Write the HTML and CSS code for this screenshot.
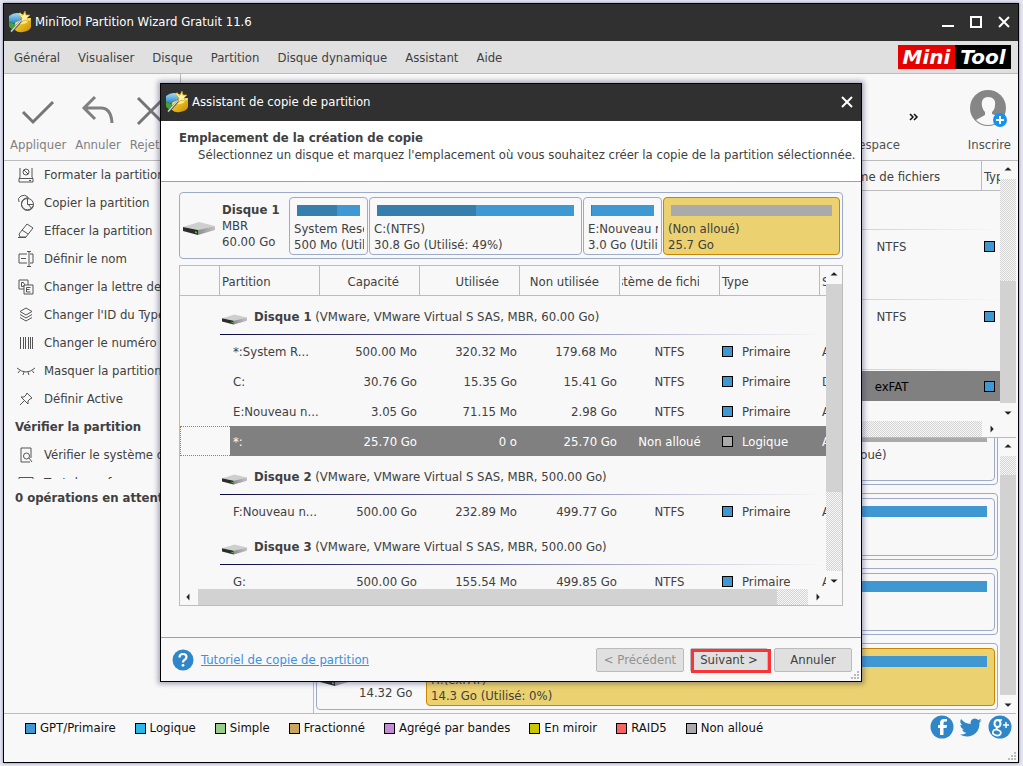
FILE: index.html
```html
<!DOCTYPE html>
<html lang="fr">
<head>
<meta charset="utf-8">
<title>MiniTool Partition Wizard Gratuit 11.6</title>
<link rel="stylesheet" href="styles.css">
</head>
<body>
<svg class="defs" aria-hidden="true">
  <defs>
    <linearGradient id="gold" x1="0" y1="0" x2="1" y2="1"><stop offset="0" stop-color="#ffe23a"/><stop offset="1" stop-color="#c98a00"/></linearGradient>
    <linearGradient id="blue" x1="0" y1="0" x2="0" y2="1"><stop offset="0" stop-color="#a8dcf4"/><stop offset="1" stop-color="#1f7fc0"/></linearGradient>
    <linearGradient id="side" x1="0" y1="0" x2="1" y2="0"><stop offset="0" stop-color="#8e8e8e"/><stop offset="1" stop-color="#c2c2c2"/></linearGradient>
    <symbol id="wizard" viewBox="0 0 22 22">
      <path d="M0 5q6-5 13-2l1 5-7 5-7-2z" fill="url(#blue)"/>
      <path d="M0 11l6 2v6q-5-1-6-4z" fill="#3fa535"/>
      <path d="M6 12l8-4 8-1v9q-1 4-8 5-5 1-8-2z" fill="url(#gold)"/>
      <path d="M6 12l8-4 8-1q-2 5-8 6t-8-1z" fill="#ffe97a"/>
      <path d="M13 9L2 21" stroke="#4a4a55" stroke-width="2.400"/><path d="M12 9.500L2 20.500" stroke="#d8d8e0" stroke-width="1.200"/>
      <path d="M16 0l1 4 4 0-3 3 2 4-4-2-4 2 1-4-3-3h4z" fill="#fff3a0" stroke="#c99b1c" stroke-width=".7"/>
      <path d="M11 1l1 2 2 0-2 2-2-1z" fill="#ffe66a"/>
    </symbol>
    <symbol id="drive" viewBox="0 0 32 13">
      <path d="M0 5L16 0l16 4-16 4z" fill="#cfcfcf"/>
      <path d="M0 5l15 3v5L0 9z" fill="#2c2c2c"/>
      <path d="M15 8l17-4v4l-17 5z" fill="url(#side)"/>
      <path d="M12 9.300l2 .4v1.600l-2-.4z" fill="#45d21e"/>
    </symbol>
    <symbol id="up" viewBox="0 0 18 18"><path d="M5 9.500L9 6l4 3.500z" fill="#222"/></symbol>
  </defs>
</svg>

<main class="window">
  <header class="titlebar">
    <svg class="logo-icon"><use href="#wizard"/></svg>
    <h1 class="title">MiniTool Partition Wizard Gratuit 11.6</h1>
    <div class="window-buttons">
      <button aria-label="Réduire"><svg viewBox="0 0 12 12"><path d="M0 10h12" stroke="#fff" stroke-width="2"/></svg></button>
      <button aria-label="Agrandir"><svg viewBox="0 0 12 12"><path d="M1 1h10v10H1z" fill="none" stroke="#fff" stroke-width="2"/></svg></button>
      <button aria-label="Fermer"><svg viewBox="0 0 12 12"><path d="M1 1l10 10M11 1L1 11" stroke="#fff" stroke-width="2"/></svg></button>
    </div>
  </header>

  <nav class="menu">
    <button>Général</button><button>Visualiser</button><button>Disque</button><button>Partition</button><button>Disque dynamique</button><button>Assistant</button><button>Aide</button>
    <div class="brand"><span class="brand-mini">Mini</span><span class="brand-tool">Tool</span></div>
  </nav>

  <div class="toolbar">
    <button class="tool" disabled><svg viewBox="0 0 36 36"><path d="M3 19l10 10L33 9" fill="none" stroke="#757575" stroke-width="3"/></svg>Appliquer</button>
    <button class="tool" disabled><svg viewBox="0 0 36 36"><path d="M15 4L4 15l11 11M4 15h17q10 0 11 15" fill="none" stroke="#808080" stroke-width="3"/></svg>Annuler</button>
    <button class="tool" disabled><svg viewBox="0 0 36 36"><path d="M5 5l26 26M31 5L5 31" fill="none" stroke="#757575" stroke-width="3"/></svg>Rejeter</button>
    <span class="tool-separator"></span>
    <span class="tool-spacer"></span>
    <button class="tool tool-dark"><span class="tool-blank"></span>Analyseur d'espace</button>
    <button class="more" aria-label="Plus"><svg viewBox="0 0 10 8"><path d="M1 1l3 3-3 3M5 1l3 3-3 3" fill="none" stroke="#111" stroke-width="1.500"/></svg></button>
    <button class="tool tool-dark tool-account">
      <svg viewBox="0 0 38 38"><circle cx="18" cy="18" r="18" fill="#868686"/><path d="M18 7c-5 0-7 4-6 9 .5 3 2 5 3 6v3l-9 5q5 5 12 5t10-4l2-4-8-3v-2c2-2 3-4 3-7 1-5-2-8-7-8z" fill="#f8f8f8"/><circle cx="30" cy="30" r="7" fill="#1691f0"/><path d="M30 26v8M26 30h8" stroke="#fff" stroke-width="2"/></svg>Inscrire</button>
  </div>

  <div class="workspace">
    <aside class="sidebar">
      <div class="actions">
        <button class="action"><svg viewBox="0 0 18 18"><path d="M3 2v9l-1 2v3h14v-3l-1-2V2M2 12.500h14" /><circle cx="9" cy="6" r="3"/><path d="M7 4l4 4M12 14.500h2"/></svg>Formater la partition</button>
        <button class="action"><svg viewBox="0 0 18 18"><path d="M12 4a6 6 0 1 0 4 8"/><path d="M2 8q-2-4 2-6t7 1"/><circle cx="10.500" cy="10.500" r="6"/><path d="M10.500 4.500v6h6M11 10l4 5"/></svg>Copier la partition</button>
        <button class="action"><svg viewBox="0 0 18 18"><path d="M10 2l6 4-7 9H3l-1-3zM5 8l6 4M1 15.500h8"/></svg>Effacer la partition</button>
        <button class="action"><svg viewBox="0 0 18 18"><path d="M10 4H2v9h8M4 8.500h5M13 4h3v9h-3M12 2v14M10 1.500h4M10 16.500h4"/></svg>Définir le nom</button>
        <button class="action"><svg viewBox="0 0 18 18"><path d="M7 11H2V2h9v5M4.500 4.500v4M4.500 4.500h2q2 2 0 4h-2"/><path d="M7 7h9v9H7zM13.500 9.500h-4v4.500h4M9.500 11.500h3"/></svg>Changer la lettre de lecteur</button>
        <button class="action"><svg viewBox="0 0 18 18"><path d="M9 2l6 3.500L9 9 3 5.500zM3 8.500L9 12l6-3.500M3 11.500L9 15l6-3.500"/></svg>Changer l'ID du Type</button>
        <button class="action"><svg viewBox="0 0 18 18"><path d="M3.500 3v12M6.500 3v12M8.500 3v12M11.500 3v12M13.500 3v12M15.500 3v12"/></svg>Changer le numéro de série</button>
        <button class="action"><svg viewBox="0 0 18 18"><path d="M0 6q9 8 18 0M3 8.500L1 11M7 10l-1 3M11 10l1 3M15 8.500l2 2.500"/></svg>Masquer la partition</button>
        <button class="action"><svg viewBox="0 0 18 18"><path d="M10 3l5 5-2 1-2 2 0 3-7-7h3l2-2zM7 11l-4 4"/></svg>Définir Active</button>
        <h2 class="actions-heading">Vérifier la partition</h2>
        <button class="action"><svg viewBox="0 0 18 18"><path d="M13 16H4V2h10v10"/><circle cx="9.500" cy="10" r="3"/><path d="M12 12l3 4"/></svg>Vérifier le système de fichiers</button>
        <button class="action"><svg viewBox="0 0 18 18"><path d="M2 3.500h14v12H2z"/></svg>Test de surface</button>
      </div>
      <p class="pending">0 opérations en attente</p>
    </aside>

    <section class="content">
      <div class="grid-view">
        <div class="grid-clip">
          <table class="grid main-grid">
            <colgroup><col><col class="col-fs"><col class="col"></colgroup>
            <thead><tr><th></th><th class="center"><span>Système de fichiers</span></th><th class="left">Type</th></tr></thead>
            <tbody>
              <tr class="group"><td colspan="3"></td></tr>
              <tr><td></td><td class="center">NTFS</td><td><i class="swatch"></i></td></tr>
              <tr class="group"><td colspan="3"></td></tr>
              <tr><td></td><td class="center">NTFS</td><td><i class="swatch"></i></td></tr>
              <tr class="group"><td colspan="3"></td></tr>
              <tr class="picked"><td></td><td class="center">exFAT</td><td><i class="swatch"></i></td></tr>
            </tbody>
          </table>
        </div>
        <div class="vbar"><svg><use href="#up"/></svg><span class="track track-a"></span><span class="thumb thumb-a"></span><svg class="down"><use href="#up"/></svg></div>
        <div class="hbar"><svg class="left-arrow"><use href="#up"/></svg><span class="track"></span><svg class="right-arrow"><use href="#up"/></svg></div>
      </div>

      <div class="map-view">
        <div class="map">
          <div class="disk">
            <svg class="drive"><use href="#drive"/></svg><div class="disk-label"></div>
            <div class="parts parts-split"><div class="part"></div><div class="part"><span class="bar bar-free"></span><span>(Non alloué)</span></div></div>
          </div>
          <div class="disk">
            <svg class="drive"><use href="#drive"/></svg><div class="disk-label"></div>
            <div class="parts"><div class="part"><span class="bar"></span></div></div>
          </div>
          <div class="disk">
            <svg class="drive"><use href="#drive"/></svg><div class="disk-label"></div>
            <div class="parts"><div class="part"><span class="bar"></span></div></div>
          </div>
          <div class="disk">
            <svg class="drive"><use href="#drive"/></svg><div class="disk-label"><strong>Disque 5</strong><span>MBR</span><span>14.32 Go</span></div>
            <div class="parts"><div class="part part-selected"><span class="bar"></span><span>H:(exFAT)</span><span>14.3 Go (Utilisé: 0%)</span></div></div>
          </div>
        </div>
        <div class="vbar"><svg><use href="#up"/></svg><span class="track track-b"></span><span class="thumb"></span><svg class="down"><use href="#up"/></svg></div>
      </div>
    </section>
  </div>

  <footer class="legend">
    <ul>
      <li><i class="box"></i>GPT/Primaire</li>
      <li><i class="box box-logical"></i>Logique</li>
      <li><i class="box box-simple"></i>Simple</li>
      <li><i class="box box-spanned"></i>Fractionné</li>
      <li><i class="box box-striped"></i>Agrégé par bandes</li>
      <li><i class="box box-mirror"></i>En miroir</li>
      <li><i class="box box-raid"></i>RAID5</li>
      <li><i class="box box-free"></i>Non alloué</li>
    </ul>
    <div class="social">
      <a href="#" aria-label="Facebook"><svg viewBox="0 0 24 24"><circle cx="12" cy="12" r="11.500" fill="#2f86c9"/><path d="M13.500 20v-7h3l.5-3h-3.500V8q0-1.500 1.500-1.500h2V4h-3q-4 0-4 4v2H8v3h2v7z" fill="#fff"/></svg></a>
      <a href="#" aria-label="Twitter"><svg viewBox="0 0 24 24"><path d="M23 5l-2.500 2.500C21 16 15 21.500 8 21.500q-4 0-7-2 4 .3 6.500-1.800-3.500-.2-4.300-3.200h2Q1.500 13.300 1.400 9.700l2 .6Q0 7.500 2 4q4 4.800 9.600 5Q11 4 15.800 3.500q2 0 3.500 1.500l3-1.200-1.900 2.500z" fill="#2f86c9"/></svg></a>
      <a href="#" aria-label="Google Plus"><svg viewBox="0 0 24 24"><circle cx="12" cy="12" r="11.500" fill="#2f86c9"/><g fill="none" stroke="#fff"><ellipse cx="9.500" cy="8.500" rx="3" ry="3.500" stroke-width="2"/><path d="M9 12q-1 2 1 3 4 1.500 2.500 4t-5.500 1-1-5l3-.6M10 5h4" stroke-width="1.700"/><path d="M18 7v6M15 10h6" stroke-width="1.500"/></g></svg></a>
    </div>
    <svg class="grip" viewBox="0 0 8 8"><path d="M6 0h2v2H6zM3 3h2v2H3zM6 3h2v2H6zM0 6h2v2H0zM3 6h2v2H3zM6 6h2v2H6z" fill="#bbb"/></svg>
  </footer>
</main>

<section class="dialog" role="dialog" aria-labelledby="dialog-title">
  <header class="titlebar titlebar-dialog">
    <svg class="logo-icon"><use href="#wizard"/></svg>
    <h2 class="title" id="dialog-title">Assistant de copie de partition</h2>
    <div class="window-buttons"><button aria-label="Fermer la fenêtre"><svg viewBox="0 0 12 12"><path d="M1 1l10 10M11 1L1 11" stroke="#fff" stroke-width="2"/></svg></button></div>
  </header>
  <div class="dialog-head">
    <h3>Emplacement de la création de copie</h3>
    <p>Sélectionnez un disque et marquez l'emplacement où vous souhaitez créer la copie de la partition sélectionnée.</p>
  </div>
  <div class="dialog-body">
    <div class="disk">
      <svg class="drive"><use href="#drive"/></svg>
      <div class="disk-label"><strong>Disque 1</strong><span>MBR</span><span>60.00 Go</span></div>
      <div class="parts parts-four">
        <div class="part"><span class="bar"><span class="used" style="width:63%"></span></span><span>System Reserved</span><span>500 Mo (Utilisé: 64%)</span></div>
        <div class="part"><span class="bar"><span class="used" style="width:50%"></span></span><span>C:(NTFS)</span><span>30.8 Go (Utilisé: 49%)</span></div>
        <div class="part"><span class="bar"><span class="used" style="width:1%"></span></span><span>E:Nouveau nom</span><span>3.0 Go (Utilisé: 2%)</span></div>
        <div class="part part-selected"><span class="bar bar-free"></span><span>(Non alloué)</span><span>25.7 Go</span></div>
      </div>
    </div>
    <div class="grid-view grid-framed">
      <div class="grid-clip">
        <table class="grid wizard-grid">
          <colgroup><col class="col-lead"><col class="col"><col class="col"><col class="col"><col class="col"><col class="col"><col class="col"><col class="col"></colgroup>
          <thead><tr><th></th><th class="left">Partition</th><th>Capacité</th><th>Utilisée</th><th>Non utilisée</th><th class="center"><span>Système de fichiers</span></th><th class="left">Type</th><th class="left">Statut</th></tr></thead>
          <tbody>
            <tr class="group"><td></td><td colspan="7"><svg class="drive"><use href="#drive"/></svg><strong>Disque 1</strong> (VMware, VMware Virtual S SAS, MBR, 60.00 Go)</td></tr>
            <tr><td></td><td class="name">*:System R...</td><td>500.00 Mo</td><td>320.32 Mo</td><td>179.68 Mo</td><td class="center">NTFS</td><td class="left"><i class="swatch"></i>Primaire</td><td class="left">Actif</td></tr>
            <tr><td></td><td class="name">C:</td><td>30.76 Go</td><td>15.35 Go</td><td>15.41 Go</td><td class="center">NTFS</td><td class="left"><i class="swatch"></i>Primaire</td><td class="left">Démarrage</td></tr>
            <tr><td></td><td class="name">E:Nouveau n...</td><td>3.05 Go</td><td>71.15 Mo</td><td>2.98 Go</td><td class="center">NTFS</td><td class="left"><i class="swatch"></i>Primaire</td><td class="left">Aucun</td></tr>
            <tr class="selected"><td></td><td class="name">*:</td><td>25.70 Go</td><td>0 o</td><td>25.70 Go</td><td class="center">Non alloué</td><td class="left"><i class="swatch swatch-free"></i>Logique</td><td class="left">Aucun</td></tr>
            <tr class="group"><td></td><td colspan="7"><svg class="drive"><use href="#drive"/></svg><strong>Disque 2</strong> (VMware, VMware Virtual S SAS, MBR, 500.00 Go)</td></tr>
            <tr><td></td><td class="name">F:Nouveau n...</td><td>500.00 Go</td><td>232.89 Mo</td><td>499.77 Go</td><td class="center">NTFS</td><td class="left"><i class="swatch"></i>Primaire</td><td class="left">Aucun</td></tr>
            <tr class="group"><td></td><td colspan="7"><svg class="drive"><use href="#drive"/></svg><strong>Disque 3</strong> (VMware, VMware Virtual S SAS, MBR, 500.00 Go)</td></tr>
            <tr><td></td><td class="name">G:</td><td>500.00 Go</td><td>155.54 Mo</td><td>499.85 Go</td><td class="center">NTFS</td><td class="left"><i class="swatch"></i>Primaire</td><td class="left">Aucun</td></tr>
          </tbody>
        </table>
      </div>
      <div class="vbar"><svg><use href="#up"/></svg><span class="thumb thumb-c"></span><span class="track track-c"></span><svg class="down"><use href="#up"/></svg></div>
      <div class="hbar"><svg class="left-arrow"><use href="#up"/></svg><span class="thumb"></span><span class="track track-d"></span><svg class="right-arrow"><use href="#up"/></svg></div>
    </div>
  </div>
  <footer class="dialog-foot">
    <svg class="help" viewBox="0 0 22 22"><circle cx="11" cy="11" r="10.500" fill="#2f86c9"/><path d="M7.500 8.500q0-3.500 3.500-3.500t3.500 3q0 1.700-1.800 2.800-1.700 1-1.700 2.700" fill="none" stroke="#fff" stroke-width="2.200"/><circle cx="11" cy="16.300" r="1.400" fill="#fff"/></svg>
    <a class="tutorial" href="#">Tutoriel de copie de partition</a>
    <button class="btn btn-wide" disabled>&lt; Précédent</button>
    <button class="btn btn-next">Suivant &gt;</button>
    <button class="btn">Annuler</button>
    <svg class="grip" viewBox="0 0 8 8"><path d="M6 0h2v2H6zM3 3h2v2H3zM6 3h2v2H6zM0 6h2v2H0zM3 6h2v2H3zM6 6h2v2H6z" fill="#bbb"/></svg>
  </footer>
</section>
</body>
</html>
```
FILE: styles.css
```css
* { box-sizing: border-box; }
body {
  margin: 0;
  height: 100vh;
  padding: 3px 4px;
  position: relative;
  overflow: hidden;
  background: #e6e6f2;
  color: #404040;
  font: 13px/16px "DejaVu Sans Condensed", "DejaVu Sans", sans-serif;
}
button { font: inherit; color: inherit; background: none; border: 0; padding: 0; }
h1, h2, h3, p, ul { margin: 0; padding: 0; font-size: inherit; list-style: none; }
svg { display: block; flex: none; }
.defs { position: absolute; width: 0; height: 0; }

.window {
  height: 100%;
  margin-left: -1px;
  display: flex;
  flex-direction: column;
  border: 1px solid #000;
  background: #f8f8f8;
  box-shadow: 0 0 3px #8080a8;
}
.titlebar { display: flex; align-items: center; flex: none; height: 37px; padding: 0 8px 2px 5px; background: #303030; color: #fff; }
.logo-icon { width: 22px; height: 22px; margin-right: 4px; }
.title { font-weight: normal; flex: 1; }
.window-buttons { display: flex; gap: 16px; }
.window-buttons svg { width: 12px; height: 12px; }

.menu { display: flex; align-items: center; flex: none; gap: 18px; height: 33px; padding: 0 7px 0 10px; background: #e0e0e0; border-bottom: 1px solid #bbb; }
.menu button { padding-top: 2px; }
.brand { display: flex; margin-left: auto; color: #fff; font: italic bold 20px/24px "DejaVu Sans", sans-serif; }
.brand span { height: 24px; text-align: center; }
.brand-mini { width: 57px; background: #e60000; }
.brand-tool { width: 56px; background: #000; }

.toolbar { display: flex; flex: none; height: 87px; padding: 0 7px 0 6px; gap: 9px; border-bottom: 1px solid #bbb; }
.tool { display: flex; flex-direction: column; align-items: center; gap: 8px; padding-top: 19px; color: #808080; white-space: nowrap; }
.tool svg, .tool-blank { width: 36px; height: 36px; }
.tool-dark { color: #505050; }
.tool-account svg { width: 38px; height: 38px; margin: -3px 0 1px; }
.tool-separator { width: 1px; background: #bbb; }
.tool-spacer { flex: 1; }
.more { width: 50px; }
.more svg { width: 10px; height: 8px; }

.workspace { flex: 1; min-height: 0; display: grid; grid-template-columns: 309px 1fr; }
.sidebar { min-height: 0; display: flex; flex-direction: column; border-bottom: 1px solid #bbb; }
.actions { height: calc(58% - 2px); overflow: hidden; }
.action { display: flex; align-items: center; gap: 9px; height: 28px; padding-left: 13px; white-space: nowrap; }
.action svg { width: 18px; height: 18px; fill: none; stroke: #555; }
.actions-heading { padding-left: 11px; line-height: 28px; }
.pending { padding: 11px; font-weight: bold; }

.content { min-height: 0; min-width: 0; display: grid; grid-template-rows: 1fr 1fr; border-left: 1px solid #bbb; padding-right: 2px; }
.grid-view { min-height: 0; min-width: 0; display: grid; grid-template: minmax(0, 1fr) 16px / minmax(0, 1fr) 16px; border-bottom: 1px solid #bbb; }
.grid-framed { flex: 1; border: 1px solid #bbb; }
.grid-clip { overflow: hidden; }
.grid { table-layout: fixed; border-spacing: 0; }
.main-grid { width: calc(100% + 82px); }
.wizard-grid { width: 740px; }
.col { width: 100px; }
.col-lead { width: 40px; }
.col-fs { width: 180px; }
.grid th { height: 30px; padding: 2px 20px 0 2px; border-right: 1px solid #bbb; border-bottom: 1px solid #bbb; font-weight: normal; text-align: right; white-space: nowrap; }
.grid td { height: 30px; padding: 2px 3px 0 2px; text-align: right; white-space: nowrap; }
.grid .left, .main-grid td:last-child { text-align: left; }
.grid .center { text-align: center; }
.grid th span { display: flex; justify-content: center; overflow: hidden; }
.grid .name { padding-left: 13px; text-align: left; }
.swatch { display: inline-block; width: 11px; height: 11px; margin-right: 9px; border: 1px solid #000; background: #3f98d2; vertical-align: -1px; }
.swatch-free { background: #aaa; }
.grid .group td { height: 40px; text-align: left; }
.grid .group td:last-child { background: linear-gradient(90deg, #0a0a40, #6a6aa0 45%, #d0d0e0 80%, #f8f8f8) 0 38px / 606px 1px no-repeat; }
.grid.main-grid .group td:last-child { background-size: 686px 1px; }
.group .drive { display: inline-block; width: 25px; height: 11px; margin-right: 7px; vertical-align: -4px; }
.picked td { background: #808080; color: #000; }
.selected { outline: 1px dotted #c07820; outline-offset: -1px; color: #fff; }
.selected td:not(:first-child) { background: #808080; }
.selected .name.name { background: linear-gradient(#808080, #808080) 10px 0 no-repeat; }

.vbar, .hbar { display: flex; }
.vbar { flex-direction: column; }
.vbar svg { width: 16px; height: 18px; }
.hbar svg { width: 18px; height: 16px; }
.down { transform: rotate(180deg); }
.left-arrow { transform: rotate(-90deg); }
.right-arrow { transform: rotate(90deg); }
.thumb { flex: 1; background: #d2d2d2; }
.track { flex: 1; background: repeating-conic-gradient(#d2d2d2 0 25%, #f8f8f8 0 50%) 0 0 / 2px 2px; }
.track-a { flex: 102; }
.thumb-a { flex: 122; }
.track-b { flex: 0 0 19px; }
.thumb-c { flex: 208; }
.track-c { flex: 79; }
.track-d { flex: 0 0 31px; }

.map-view { min-height: 0; display: grid; grid-template-columns: 1fr 16px; border-bottom: 1px solid #bbb; }
.map { min-height: 0; display: flex; flex-direction: column; justify-content: flex-end; gap: 8px; padding: 0 2px 3px; overflow: hidden; }
.disk { display: flex; align-items: center; flex: none; height: 67px; padding: 4px 2px 3px 3px; border: 1px solid #9dabc9; border-radius: 4px; }
.disk > .drive { width: 32px; height: 13px; margin-top: 5px; }
.disk-label { display: flex; flex-direction: column; width: 67px; margin-left: 7px; }
.parts { flex: 1; min-width: 0; align-self: stretch; display: grid; gap: 1px; }
.parts-split { grid-template-columns: 1fr 185px; }
.parts-four { grid-template-columns: 79px 213px 79px 1fr; }
.part { display: flex; flex-direction: column; min-width: 0; padding: 7px 3px 0 4px; border: 1px solid #9dabc9; border-radius: 4px; overflow: hidden; white-space: nowrap; }
.part > span { overflow: hidden; }
.part-selected { background: #ebd16f; border-color: #c98500; }
.part .bar { display: flex; height: 11px; margin: 0 4px 5px 3px; background: #3f98d2; }
.part .bar-free { background: #aaa; }
.used { background: #357eae; }

.legend { display: flex; align-items: flex-start; flex: none; height: 48px; padding: 1px 6px 0 21px; position: relative; color: #111; }
.legend ul { display: flex; flex: 1; gap: 19px; padding-top: 5px; }
.legend li { display: flex; align-items: center; gap: 4px; }
.box { width: 11px; height: 11px; border: 1px solid #000; background: #3f98d2; }
.box-logical { background: #2bb8e8; }
.box-simple { background: #98cc88; }
.box-spanned { background: #c9a55d; }
.box-striped { background: #c58bd8; }
.box-mirror { background: #c8c800; }
.box-raid { background: #f86464; }
.box-free { background: #aaa; }
.social { display: flex; gap: 5px; }
.social svg { width: 24px; height: 24px; }
.grip { position: absolute; right: 2px; bottom: 2px; width: 8px; height: 8px; }

.dialog {
  position: absolute;
  left: 160px;
  top: 83px;
  width: 702px;
  height: 599px;
  display: flex;
  flex-direction: column;
  background: #f8f8f8;
  border: 1px solid #000;
  box-shadow: 0 0 5px 2px rgba(40, 40, 90, .4);
}
.dialog-head { flex: none; height: 61px; padding: 9px 18px; background: #fff; border-bottom: 1px solid #a0a0a0; }
.dialog-head p { padding: 1px 0 0 19px; white-space: nowrap; }
.dialog-body { flex: 1; min-height: 0; display: flex; flex-direction: column; gap: 6px; padding: 10px 18px 31px; }
.dialog-foot { display: flex; align-items: center; flex: none; gap: 6px; height: 44px; padding: 0 9px 0 11px; position: relative; border-top: 1px solid #a0a0a0; }
.help { width: 22px; height: 22px; }
.tutorial { flex: 1; color: #3f8fe0; }
.dialog-foot .tutorial { margin-left: 1px; }
.btn { width: 78px; height: 24px; border: 1px solid #bbb; border-radius: 2px; background: #e0e0e0; position: relative; }
.btn-wide { width: 88px; }
.btn:disabled { color: #909090; }
.btn-next::after { content: ""; position: absolute; left: 0; right: -4px; top: 0; bottom: -2px; border: 3px solid #fb3337; }
```
